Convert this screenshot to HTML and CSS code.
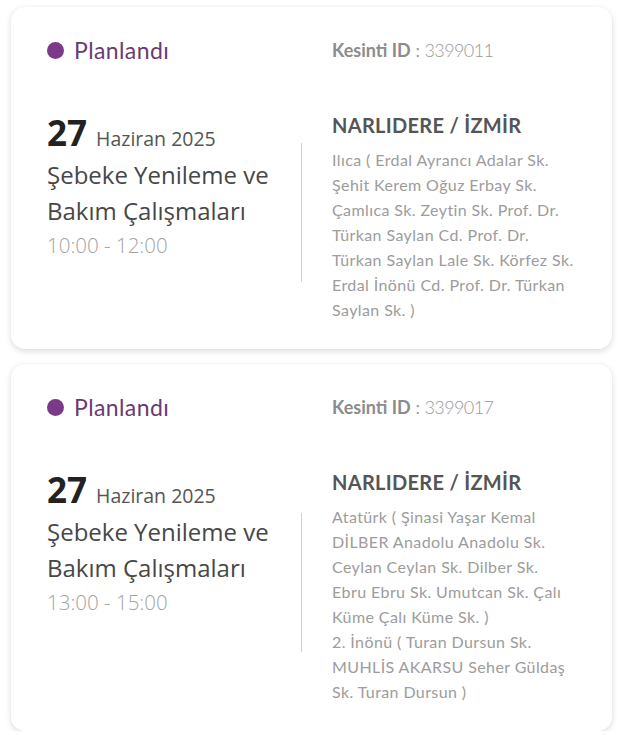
FILE: index.html
```html
<!DOCTYPE html>
<html lang="tr">
<head>
<meta charset="utf-8">
<title>Planlı Kesintiler</title>
<link rel="stylesheet" href="styles.css">
</head>
<body>
<main class="list">
  <article class="card">
    <header class="card-head">
      <div class="status"><span class="status-dot"></span><span class="status-text">Planlandı</span></div>
      <div class="outage-id"><span class="id-label">Kesinti ID</span> : <span class="id-value">3399011</span></div>
    </header>
    <div class="card-body">
      <div class="when">
        <div class="date"><span class="day">27</span><span class="month">Haziran 2025</span></div>
        <div class="title">Şebeke Yenileme ve<br>Bakım Çalışmaları</div>
        <div class="time">10:00 - 12:00</div>
      </div>
      <div class="divider"></div>
      <div class="where">
        <div class="city">NARLIDERE / İZMİR</div>
        <p class="streets">Ilıca ( Erdal Ayrancı Adalar Sk.<br>Şehit Kerem Oğuz Erbay Sk.<br>Çamlıca Sk. Zeytin Sk. Prof. Dr.<br>Türkan Saylan Cd. Prof. Dr.<br>Türkan Saylan Lale Sk. Körfez Sk.<br>Erdal İnönü Cd. Prof. Dr. Türkan<br>Saylan Sk. )</p>
      </div>
    </div>
  </article>

  <article class="card">
    <header class="card-head">
      <div class="status"><span class="status-dot"></span><span class="status-text">Planlandı</span></div>
      <div class="outage-id"><span class="id-label">Kesinti ID</span> : <span class="id-value">3399017</span></div>
    </header>
    <div class="card-body">
      <div class="when">
        <div class="date"><span class="day">27</span><span class="month">Haziran 2025</span></div>
        <div class="title">Şebeke Yenileme ve<br>Bakım Çalışmaları</div>
        <div class="time">13:00 - 15:00</div>
      </div>
      <div class="divider"></div>
      <div class="where">
        <div class="city">NARLIDERE / İZMİR</div>
        <p class="streets">Atatürk ( Şinasi Yaşar Kemal<br>DİLBER Anadolu Anadolu Sk.<br>Ceylan Ceylan Sk. Dilber Sk.<br>Ebru Ebru Sk. Umutcan Sk. Çalı<br>Küme Çalı Küme Sk. )</p>
        <p class="streets">2. İnönü ( Turan Dursun Sk.<br>MUHLİS AKARSU Seher Güldaş<br>Sk. Turan Dursun )</p>
      </div>
    </div>
  </article>
</main>
</body>
</html>
```

FILE: styles.css
```css
html, body {
  margin: 0;
  padding: 0;
  background: #ffffff;
}

.list {
  display: flex;
  flex-direction: column;
  gap: 15px;
  padding: 7px 16px 0 11px;
}

.card {
  background: #ffffff;
  border-radius: 14px;
  box-shadow: 0 2px 6px rgba(0, 0, 0, 0.14), 0 0 2px rgba(0, 0, 0, 0.04);
  padding: 29px 30px 27px 36px;
}

.card-head {
  display: grid;
  grid-template-columns: 285px 1fr;
  align-items: center;
  height: 28px;
  font-family: Lato, "Noto Sans", sans-serif;
}

.status {
  display: flex;
  align-items: center;
  gap: 10px;
}

.status-dot {
  width: 17px;
  height: 17px;
  border-radius: 50%;
  background: #7b3a88;
}

.status-text {
  font-size: 23px;
  line-height: 28px;
  letter-spacing: 0.4px;
  color: #6b3a72;
}

.outage-id {
  font-size: 18px;
  line-height: 28px;
  color: #9a9a9a;
}

.id-label {
  font-weight: 700;
  color: #8c8c8c;
}

.id-value {
  font-weight: 300;
  letter-spacing: -0.6px;
}

.card-body {
  display: grid;
  grid-template-columns: 254px 1px 1fr;
  align-items: start;
  margin-top: 47px;
}

.when {
  font-family: "Open Sans", "Noto Sans", sans-serif;
}

.date {
  display: flex;
  align-items: baseline;
  gap: 9px;
  line-height: 44px;
  height: 44px;
}

.day {
  font-size: 35px;
  font-weight: 700;
  color: #222222;
}

.month {
  font-size: 19.5px;
  color: #555555;
}

.title {
  margin-top: 2px;
  font-size: 24px;
  line-height: 36px;
  color: #474747;
}

.time {
  font-size: 20.5px;
  line-height: 32px;
  font-weight: 300;
  color: #a3a3a3;
}

.divider {
  align-self: center;
  margin-bottom: 8px;
  height: 139px;
  background: #d0d0d0;
}

.where {
  padding-left: 30px;
  font-family: Lato, "Noto Sans", sans-serif;
}

.city {
  font-size: 20px;
  line-height: 28px;
  font-weight: 700;
  letter-spacing: 0.3px;
  color: #555555;
}

.streets {
  margin: 8px 0 0;
  font-size: 16px;
  line-height: 25px;
  letter-spacing: 0.4px;
  white-space: nowrap;
  color: #9c9c9c;
}

.streets + .streets {
  margin-top: 0;
}
```
